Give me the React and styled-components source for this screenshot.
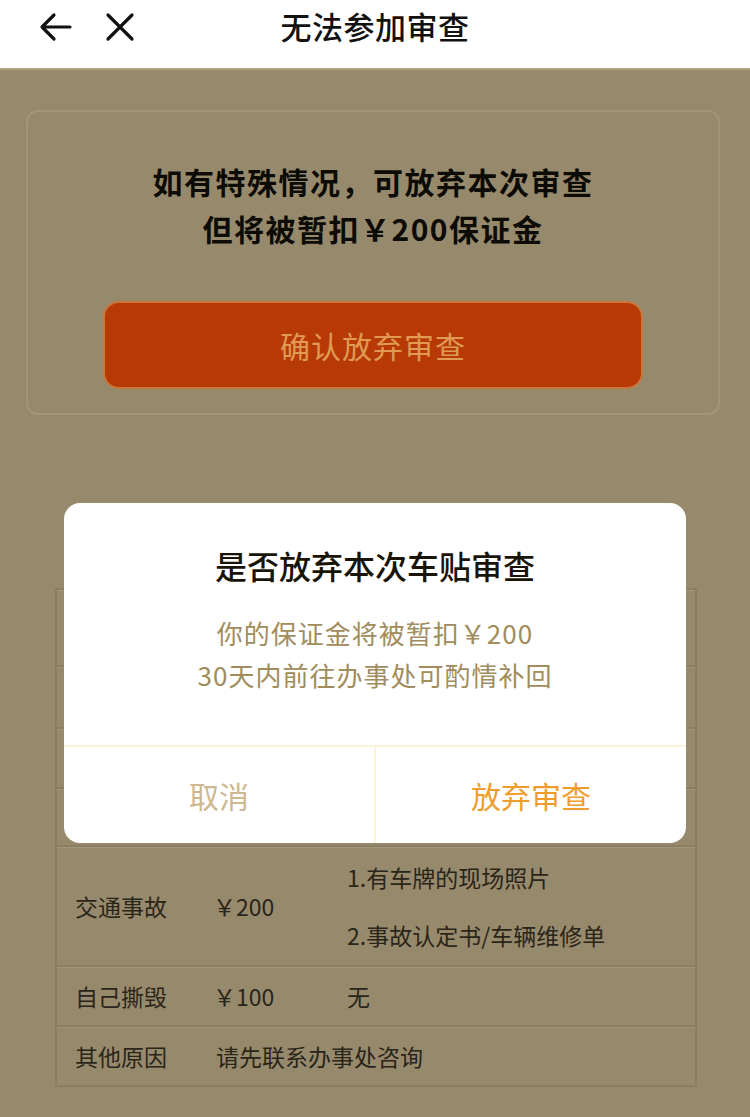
import styled, { createGlobalStyle } from 'styled-components';

const GlobalStyle = createGlobalStyle`
  * { box-sizing: border-box; }
  html, body {
    margin: 0;
    padding: 0;
    background: #978a6c;
    font-family: "Noto Sans CJK SC", "Noto Sans", sans-serif;
  }
`;

// first rows sit under the dialog, so they stay empty
const rows = [
    {reason: '', fee: '', need: [], h: 77},
    {reason: '', fee: '', need: [], h: 62},
    {reason: '', fee: '', need: [], h: 60},
    {reason: '', fee: '', need: [], h: 58},
    {reason: '交通事故', fee: '￥200', need: ['1.有车牌的现场照片', '2.事故认定书/车辆维修单'], h: 120},
    {reason: '自己撕毁', fee: '￥100', need: ['无'], h: 60},
];

export default function App() {
    return (
        <Page>
            <GlobalStyle/>
            <NavBar>
                <NavIcons>
                    <svg width="34" height="30" viewBox="0 0 34 30" fill="none" stroke="#111" strokeWidth="3.2" strokeLinecap="round" strokeLinejoin="round">
                        <path d="M31 15H4M15 3L3 15l12 12"/>
                    </svg>
                    <svg width="30" height="30" viewBox="0 0 30 30" fill="none" stroke="#111" strokeWidth="3.2" strokeLinecap="round">
                        <path d="M3 3l24 24M27 3L3 27"/>
                    </svg>
                </NavIcons>
                <NavTitle>无法参加审查</NavTitle>
            </NavBar>

            <Card>
                <Notice>
                    如有特殊情况，可放弃本次审查<br/>
                    但将被暂扣￥200保证金
                </Notice>
                <DangerButton>确认放弃审查</DangerButton>
            </Card>

            <Table>
                {rows.map((r, i) => (
                    <Row key={i} $h={r.h}>
                        <Reason>{r.reason}</Reason>
                        <Fee>{r.fee}</Fee>
                        <Need>
                            {r.need.map((n) => <span key={n}>{n}</span>)}
                        </Need>
                    </Row>
                ))}
                <Row $h={60}>
                    <Reason>其他原因</Reason>
                    <Wide>请先联系办事处咨询</Wide>
                </Row>
            </Table>

            <Dialog>
                <DialogBody>
                    <DialogTitle>是否放弃本次车贴审查</DialogTitle>
                    <DialogText>
                        你的保证金将被暂扣￥200<br/>
                        30天内前往办事处可酌情补回
                    </DialogText>
                </DialogBody>
                <DialogFooter>
                    <DialogBtn $color="#cdb88f">取消</DialogBtn>
                    <DialogBtn $color="#f09c2c">放弃审查</DialogBtn>
                </DialogFooter>
            </Dialog>
        </Page>
    );
}

const Page = styled.div`
  width: 750px;
  min-height: 1117px;
  background: #978a6c;
  overflow: hidden;
`

const NavBar = styled.header`
  height: 70px;
  background: #fff;
  border-bottom: 2px solid #b3a584;
  display: flex;
  align-items: center;
  justify-content: center;
  position: relative;
`

const NavIcons = styled.div`
  position: absolute;
  left: 39px;
  top: 12px;
  display: flex;
  align-items: center;
  gap: 32px;
`

const NavTitle = styled.h1`
  margin: 0 0 18px;
  font-size: 31px;
  font-weight: 500;
  color: #111;
  letter-spacing: 0.5px;
`

const Card = styled.section`
  margin: 40px 30px 0 26px;
  height: 305px;
  border: 2px solid #a2957a;
  border-radius: 12px;
  display: flex;
  flex-direction: column;
  align-items: center;
  padding-top: 46px;
`

const Notice = styled.p`
  margin: 0;
  text-align: center;
  font-size: 30px;
  font-weight: 700;
  line-height: 47px;
  letter-spacing: 1.5px;
  color: #0d0b06;
`

const DangerButton = styled.button`
  margin-top: 51px;
  width: 536px;
  height: 84px;
  border: none;
  border-radius: 14px;
  background: #b73a06;
  box-shadow: 0 0 0 2px #c9763a;
  color: #e09a52;
  font-family: inherit;
  font-size: 30px;
  letter-spacing: 1px;
`

const Table = styled.div`
  margin: 173px 53px 0 55px;
  border: 2px solid #8b7f63;
  border-bottom: none;
`

const Row = styled.div`
  height: ${(p) => p.$h}px;
  display: flex;
  align-items: center;
  border-bottom: 2px solid #8b7f63;
  box-shadow: inset 0 1px 0 #a3967b;
  font-size: 23px;
  color: #2a2519;
`

const Reason = styled.span`
  width: 156px;
  padding-left: 18px;
`

const Fee = styled.span`
  width: 134px;
`

const Need = styled.span`
  display: flex;
  flex-direction: column;
  gap: 24px;
`

const Wide = styled.span`
  padding-left: 3px;
`

const Dialog = styled.div`
  position: absolute;
  left: 64px;
  top: 503px;
  width: 622px;
  height: 340px;
  background: #fff;
  border-radius: 16px;
  display: flex;
  flex-direction: column;
  overflow: hidden;
`

const DialogBody = styled.div`
  height: 244px;
  display: flex;
  flex-direction: column;
  align-items: center;
  padding-top: 39px;
  border-bottom: 2px solid #fcf2d6;
`

const DialogTitle = styled.h2`
  margin: 0;
  font-size: 32px;
  font-weight: 500;
  color: #181408;
`

const DialogText = styled.p`
  margin: 24px 0 0;
  text-align: center;
  font-size: 26px;
  line-height: 42px;
  letter-spacing: 1px;
  color: #a18c5c;
`

const DialogFooter = styled.div`
  flex: 1;
  display: flex;
`

const DialogBtn = styled.div`
  flex: 1;
  display: flex;
  align-items: center;
  justify-content: center;
  font-size: 30px;
  color: ${(p) => p.$color};
  & + & {
    border-left: 2px solid #fcf2d6;
  }
`
